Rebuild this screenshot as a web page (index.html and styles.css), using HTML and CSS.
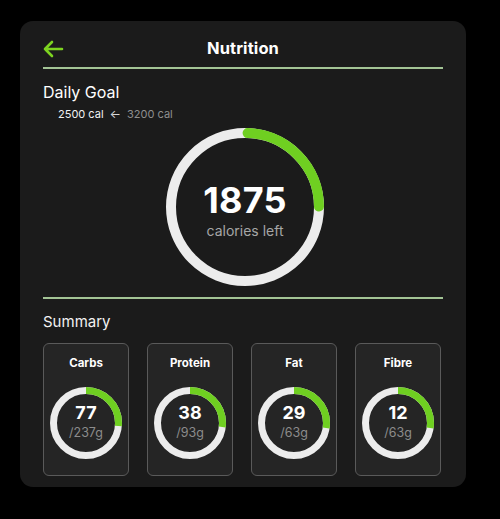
FILE: index.html
```html
<!DOCTYPE html>
<html>
<head>
<meta charset="utf-8">
<link rel="stylesheet" href="styles.css">
</head>
<body>
<div class="panel">
  <div class="header">
    <svg class="back" width="22" height="18" viewBox="0 0 22 18"><path d="M20 9H3M10 2L3 9l7 7" fill="none" stroke="#7dd320" stroke-width="2.6" stroke-linecap="round" stroke-linejoin="round"/></svg>
    <div class="title">Nutrition</div>
  </div>
  <div class="goal-title">Daily Goal</div>
  <div class="goal-sub"><span class="cur">2500 cal</span><span class="arr">&larr;</span><span class="old">3200 cal</span></div>
  <div class="big-wrap">
    <div class="big">
      <svg width="158" height="158" viewBox="0 0 158 158">
        <circle cx="79" cy="79" r="74" fill="none" stroke="#ececec" stroke-width="10"/>
        <circle cx="79" cy="79" r="74" fill="none" stroke="#6fcf21" stroke-width="10" stroke-linecap="round" stroke-dasharray="113 400" transform="rotate(-88 79 79)"/>
      </svg>
      <div class="big-text">
        <div class="big-num">1875</div>
        <div class="big-lbl">calories left</div>
      </div>
    </div>
  </div>
  <div class="sep"></div>
  <div class="sum-title">Summary</div>
  <div class="cards">
    <div class="card">
      <div class="card-title">Carbs</div>
      <div class="ring">
        <svg width="72" height="72" viewBox="0 0 72 72"><circle cx="36" cy="36" r="32.5" fill="none" stroke="#ececec" stroke-width="7"/><circle cx="36" cy="36" r="32.5" fill="none" stroke="#6fcf21" stroke-width="7" stroke-dasharray="54 300" transform="rotate(-90 36 36)"/></svg>
        <div class="ring-text"><div class="r-num">77</div><div class="r-lbl">/237g</div></div>
      </div>
    </div>
    <div class="card">
      <div class="card-title">Protein</div>
      <div class="ring">
        <svg width="72" height="72" viewBox="0 0 72 72"><circle cx="36" cy="36" r="32.5" fill="none" stroke="#ececec" stroke-width="7"/><circle cx="36" cy="36" r="32.5" fill="none" stroke="#6fcf21" stroke-width="7" stroke-dasharray="55 300" transform="rotate(-90 36 36)"/></svg>
        <div class="ring-text"><div class="r-num">38</div><div class="r-lbl">/93g</div></div>
      </div>
    </div>
    <div class="card">
      <div class="card-title">Fat</div>
      <div class="ring">
        <svg width="72" height="72" viewBox="0 0 72 72"><circle cx="36" cy="36" r="32.5" fill="none" stroke="#ececec" stroke-width="7"/><circle cx="36" cy="36" r="32.5" fill="none" stroke="#6fcf21" stroke-width="7" stroke-dasharray="56 300" transform="rotate(-90 36 36)"/></svg>
        <div class="ring-text"><div class="r-num">29</div><div class="r-lbl">/63g</div></div>
      </div>
    </div>
    <div class="card">
      <div class="card-title">Fibre</div>
      <div class="ring">
        <svg width="72" height="72" viewBox="0 0 72 72"><circle cx="36" cy="36" r="32.5" fill="none" stroke="#ececec" stroke-width="7"/><circle cx="36" cy="36" r="32.5" fill="none" stroke="#6fcf21" stroke-width="7" stroke-dasharray="56 300" transform="rotate(-90 36 36)"/></svg>
        <div class="ring-text"><div class="r-num">12</div><div class="r-lbl">/63g</div></div>
      </div>
    </div>
  </div>
</div>
</body>
</html>
```
FILE: styles.css
```css
* { box-sizing: border-box; }
html, body { margin: 0; padding: 0; }
body {
  background: #000;
  width: 500px;
  height: 519px;
  font-family: "Inter", "Noto Sans", sans-serif;
  color: #fff;
  overflow: hidden;
}
.panel {
  margin: 21px 0 0 20px;
  width: 446px;
  height: 466px;
  background: #1b1b1b;
  border-radius: 13px;
  padding: 0 23px;
}
.header {
  position: relative;
  padding-top: 8px;
  height: 48px;
  display: flex;
  align-items: center;
  justify-content: center;
  border-bottom: 2px solid #a3c495;
}
.back {
  position: absolute;
  left: -1px;
  top: 19px;
}
.title {
  font-size: 16.5px;
  font-weight: 700;
  letter-spacing: 0.1px;
}
.goal-title {
  margin-top: 13px;
  font-size: 16px;
  line-height: 20px;
  font-weight: 400;
}
.goal-sub {
  margin-top: 5px;
  padding-left: 15px;
  font-size: 11px;
  line-height: 14px;
  display: flex;
  gap: 6px;
  align-items: center;
}
.goal-sub .cur { color: #f2f2f2; font-weight: 400; }
.goal-sub .arr { color: #d8d8d8; font-size: 12px; }
.goal-sub .old { color: #8f8f8f; }
.big-wrap {
  margin-top: 7px;
  display: flex;
  justify-content: center;
  padding-left: 4px;
}
.big {
  display: grid;
  width: 158px;
  height: 158px;
}
.big > svg, .big-text { grid-area: 1 / 1; }
.big-text {
  display: flex;
  flex-direction: column;
  align-items: center;
  justify-content: center;
  padding-top: 2px;
}
.big-num {
  font-size: 36px;
  line-height: 44px;
  font-weight: 700;
  letter-spacing: 0.3px;
}
.big-lbl {
  font-size: 14px;
  line-height: 17px;
  color: #a6a6a6;
}
.sep {
  margin-top: 11px;
  height: 2px;
  background: #a3c495;
}
.sum-title {
  margin-top: 13px;
  font-size: 15px;
  line-height: 20px;
  color: #f2f2f2;
}
.cards {
  margin-top: 11px;
  display: grid;
  grid-template-columns: repeat(4, 86px);
  column-gap: 18px;
}
.card {
  height: 133px;
  background: #252525;
  border: 1px solid #5a5a5a;
  border-radius: 6px;
  padding-top: 12px;
  display: flex;
  flex-direction: column;
  align-items: center;
}
.card-title {
  font-size: 11.5px;
  line-height: 14px;
  font-weight: 700;
}
.ring {
  margin-top: 17px;
  display: grid;
  width: 72px;
  height: 72px;
}
.ring > svg, .ring-text { grid-area: 1 / 1; }
.ring-text {
  display: flex;
  flex-direction: column;
  align-items: center;
  justify-content: center;
  padding-bottom: 4px;
}
.r-num {
  font-size: 18px;
  line-height: 22px;
  font-weight: 700;
  margin-bottom: 1px;
}
.r-lbl {
  font-size: 12.5px;
  line-height: 15px;
  color: #8c8c8c;
}
```
